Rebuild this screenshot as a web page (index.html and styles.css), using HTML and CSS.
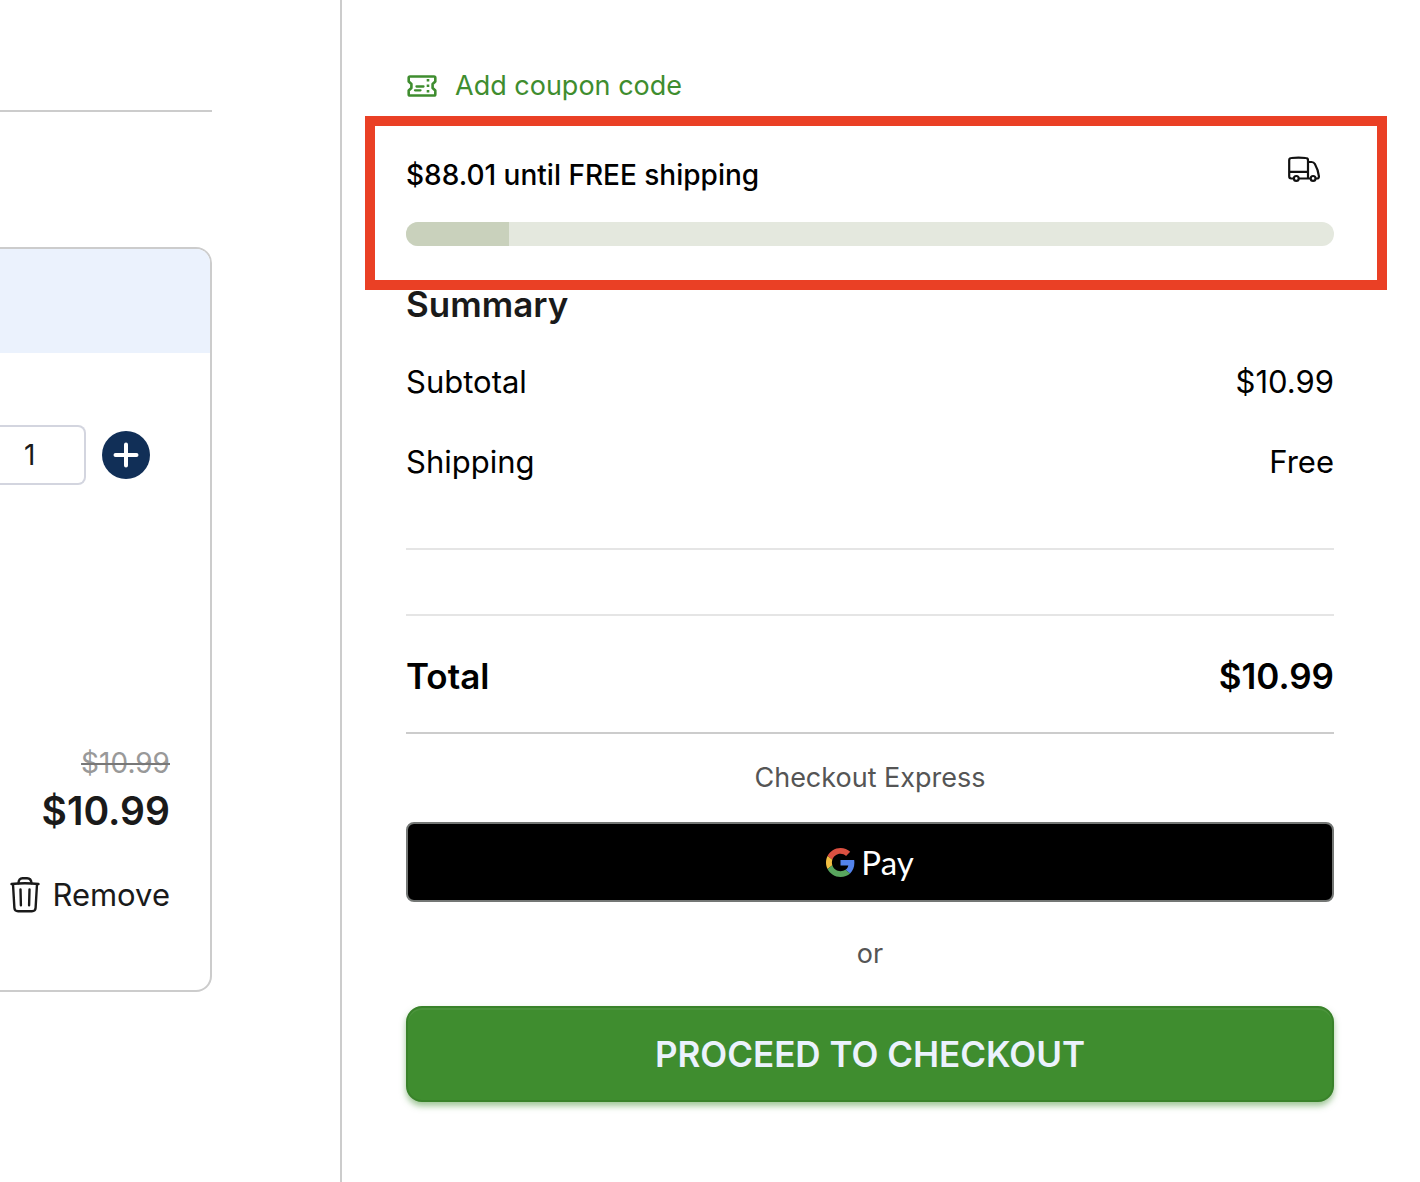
FILE: index.html
```html
<!DOCTYPE html>
<html lang="en">
<head>
    <meta charset="UTF-8">
    <meta name="viewport" content="width=device-width, initial-scale=1.0">
    <title>Cart</title>
    <link rel="stylesheet" href="styles.css">
</head>
<body>
    <div class="page">
        <main class="cart">
            <hr class="cart-line">
            <div class="cart-item">
                <div class="item-banner"></div>
                <div class="item-body">
                    <div class="quantity">
                        <input type="text" class="quantity-input" value="1" aria-label="Quantity">
                        <button class="quantity-add" aria-label="Increase quantity">
                            <svg width="26" height="26" viewBox="0 0 26 26" fill="none" stroke="#fff" stroke-width="4" stroke-linecap="round">
                                <path d="M13 2.5v21M2.5 13h21"/>
                            </svg>
                        </button>
                    </div>
                    <div class="item-prices">
                        <s class="old-price">$10.99</s>
                        <strong class="price">$10.99</strong>
                    </div>
                    <button class="remove">
                        <svg width="30" height="36" viewBox="0 0 30 36" fill="none" stroke="#1a1a1a" stroke-width="2.4" stroke-linecap="round" stroke-linejoin="round">
                            <path d="M1.5 7C10 6 20 6 28.5 7"/>
                            <path d="M8.5 6.2C8.5 2.8 10 1.2 12.5 1.2h4.600c2.600 0 4.200 1.600 4.400 5"/>
                            <path d="M3 7.200l1.400 23.800c.2 2.300 1.400 3.300 3.700 3.300h13.800c2.300 0 3.500-1 3.700-3.300L27 7.200"/>
                            <path d="M10.500 12.500l.4 15.800M19.500 12.500l-.4 15.800"/>
                        </svg>
                        Remove
                    </button>
                </div>
            </div>
        </main>

        <aside class="order">
            <a href="#" class="coupon">
                <svg width="32" height="22" viewBox="-1 0 32 22" fill="none" stroke="#3f8d2f" stroke-width="2.6" stroke-linecap="round" stroke-linejoin="round">
                    <path d="M3 1.500h24c.8 0 1.300.5 1.300 1.300v3.700L25.600 9v4l2.700 2.500v3.700c0 .8-.5 1.300-1.300 1.300H3c-.8 0-1.300-.5-1.300-1.300v-3.700L4.400 13V9L1.700 6.500V2.800c0-.8.5-1.300 1.300-1.300z"/>
                    <path d="M9.500 11.500h7M8 15.300h5.500" stroke-width="2.3"/>
                    <path d="M21 4v2.500M21 9.500V12M21 15v2.500" stroke-width="2.6" stroke-linecap="butt"/>
                </svg>
                Add coupon code
            </a>

            <section class="free-shipping">
                <div class="highlight"></div>
                <div class="free-shipping-text">
                    <span>$88.01 until FREE shipping</span>
                    <svg class="truck" width="32" height="26" viewBox="0 0 32 26" fill="none" stroke="#111" stroke-width="2.2" stroke-linejoin="round">
                        <path d="M5.800 22.500H3.200C1.800 22.500 1.200 21.700 1.200 20.300V4.200c0-1.500.8-2.200 2.200-2.200 4.600-.5 9.600-.5 14.200 0 1.500 0 2.400.7 2.400 2.200v18.300h-9.200M1.200 15.800H20M20 6h3.500c1.600 0 2.600.6 3.400 2 2.200 3.900 3.500 7.800 4 12.200.1 1.500-.6 2.300-2 2.300h-1.300M20 22.500h2.600"/>
                        <circle cx="8.300" cy="22.400" r="2.400"/>
                        <circle cx="25.100" cy="22.400" r="2.400"/>
                    </svg>
                </div>
                <div class="progress" role="progressbar" aria-label="Free shipping progress" aria-valuenow="11">
                    <div class="progress-fill" style="width: 11.1%"></div>
                </div>
            </section>

            <h2>Summary</h2>
            <div class="row"><span>Subtotal</span><span>$10.99</span></div>
            <div class="row"><span>Shipping</span><span>Free</span></div>
            <div class="divider"></div>
            <div class="row total"><span>Total</span><span>$10.99</span></div>

            <p class="note">Checkout Express</p>
            <button class="gpay" aria-label="Google Pay">
                <svg width="29" height="29" viewBox="0 0 48 48">
                    <path fill="#db5041" d="M24 9.500c3.540 0 6.710 1.220 9.210 3.600l6.850-6.850C35.900 2.380 30.470 0 24 0 14.620 0 6.510 5.380 2.560 13.220l7.980 6.190C12.430 13.720 17.740 9.500 24 9.500z"/>
                    <path fill="#5383ec" d="M46.980 24.550c0-1.570-.15-3.090-.38-4.550H24v9.020h12.940c-.58 2.960-2.260 5.480-4.780 7.180l7.730 6c4.510-4.180 7.090-10.360 7.090-17.650z"/>
                    <path fill="#f1be42" d="M10.530 28.590c-.48-1.450-.76-2.990-.76-4.590s.27-3.140.76-4.590l-7.980-6.190C.92 16.460 0 20.120 0 24s.92 7.540 2.560 10.780l7.970-6.190z"/>
                    <path fill="#58a55d" d="M24 48c6.480 0 11.930-2.130 15.890-5.810l-7.730-6c-2.150 1.450-4.920 2.300-8.160 2.300-6.260 0-11.570-4.220-13.470-9.910l-7.980 6.190C6.510 42.620 14.620 48 24 48z"/>
                </svg>
                Pay
            </button>
            <p class="note or">or</p>
            <button class="checkout">PROCEED TO CHECKOUT</button>
        </aside>
    </div>
</body>
</html>
```

FILE: styles.css
```css
* {
    box-sizing: border-box;
}
body {
    margin: 0;
    font-family: Inter, "Liberation Sans", sans-serif;
    font-size: 31px;
    line-height: 40px;
    color: #000;
    background: #fff;
}
button {
    font-family: inherit;
    cursor: pointer;
}
.page {
    display: grid;
    grid-template-columns: 342px 1fr;
    min-height: 100vh;
}

/* cart column */
.cart {
    padding: 110px 128px 0 0;
    border-right: 2px solid #ccc;
}
.cart-line {
    margin: 0;
    border: none;
    border-top: 2px solid #ccc;
}
.cart-item {
    margin-top: 135px;
    border: 2px solid #ccc;
    border-left: none;
    border-radius: 0 16px 16px 0;
    overflow: hidden;
}
.item-banner {
    height: 104px;
    background: #ebf2fd;
}
.item-body {
    display: flex;
    flex-direction: column;
    align-items: flex-end;
    padding: 72px 40px 75px 0;
    color: #1a1a1a;
}
.quantity {
    display: flex;
    align-items: center;
    gap: 16px;
    align-self: stretch;
}
.quantity-input {
    width: 86px;
    height: 60px;
    padding: 0 24px;
    border: 2px solid #d3d5df;
    border-left: none;
    border-radius: 0 8px 8px 0;
    font-family: inherit;
    font-size: 28px;
    color: #1a1a1a;
}
.quantity-add {
    display: flex;
    align-items: center;
    justify-content: center;
    flex: none;
    width: 48px;
    height: 48px;
    padding: 0;
    border: none;
    border-radius: 50%;
    background: #112f57;
}
.item-prices {
    display: flex;
    flex-direction: column;
    align-items: flex-end;
    margin-top: 260px;
}
.old-price {
    font-size: 28px;
    line-height: 36px;
    color: #999;
    text-decoration-color: #777;
}
.price {
    margin-top: 6px;
    font-size: 39px;
    line-height: 48px;
    font-weight: 600;
}
.remove {
    display: flex;
    align-items: center;
    gap: 12px;
    margin-top: 40px;
    padding: 0;
    border: none;
    background: none;
    font-size: 31px;
    line-height: 40px;
    color: #1a1a1a;
}

/* order column */
.order {
    padding: 68px 86px 80px 64px;
}
.coupon {
    display: flex;
    align-items: center;
    gap: 17px;
    font-size: 27px;
    line-height: 36px;
    color: #3f8d2f;
    text-decoration: none;
}
.free-shipping {
    position: relative;
    margin-top: 52px;
}
.highlight {
    position: absolute;
    inset: -40px -53px -44px -41px;
    border: 10px solid #ea4025;
    pointer-events: none;
}
.free-shipping-text {
    display: flex;
    justify-content: space-between;
    align-items: flex-start;
    padding-right: 14px;
    font-size: 28px;
    line-height: 38px;
    font-weight: 500;
}
.progress {
    height: 24px;
    margin-top: 28px;
    border-radius: 12px;
    background: #e4e8de;
    overflow: hidden;
}
.progress-fill {
    height: 100%;
    background: #c9d1bc;
}
h2 {
    margin: 36px 0;
    font-size: 35px;
    line-height: 44px;
    font-weight: 600;
    color: #1a1a1a;
}
.row {
    display: flex;
    justify-content: space-between;
    margin-bottom: 40px;
}
.divider {
    height: 68px;
    margin-top: 66px;
    border: solid #e5e5e5;
    border-width: 2px 0;
}
.total {
    margin: 0;
    padding: 38px 0 34px;
    border-bottom: 2px solid #ccc;
    font-size: 35px;
    line-height: 44px;
    font-weight: 600;
}
.note {
    margin: 26px 0;
    font-size: 27px;
    line-height: 36px;
    text-align: center;
    color: #555;
}
.gpay {
    display: flex;
    align-items: center;
    justify-content: center;
    gap: 6px;
    width: 100%;
    height: 80px;
    border: 2px solid #747775;
    border-radius: 8px;
    background: #000;
    color: #fff;
    font-family: Lato, sans-serif;
    font-size: 33px;
}
.or {
    margin: 34px 0;
}
.checkout {
    width: 100%;
    height: 96px;
    border: 2px solid #39822a;
    border-radius: 16px;
    background: #3f8d2f;
    box-shadow: 0 4px 6px rgba(63, 141, 47, 0.5), inset 0 2px 0 rgba(255, 255, 255, 0.06);
    color: #ebf2fd;
    font-size: 35px;
    font-weight: 600;
}
```
